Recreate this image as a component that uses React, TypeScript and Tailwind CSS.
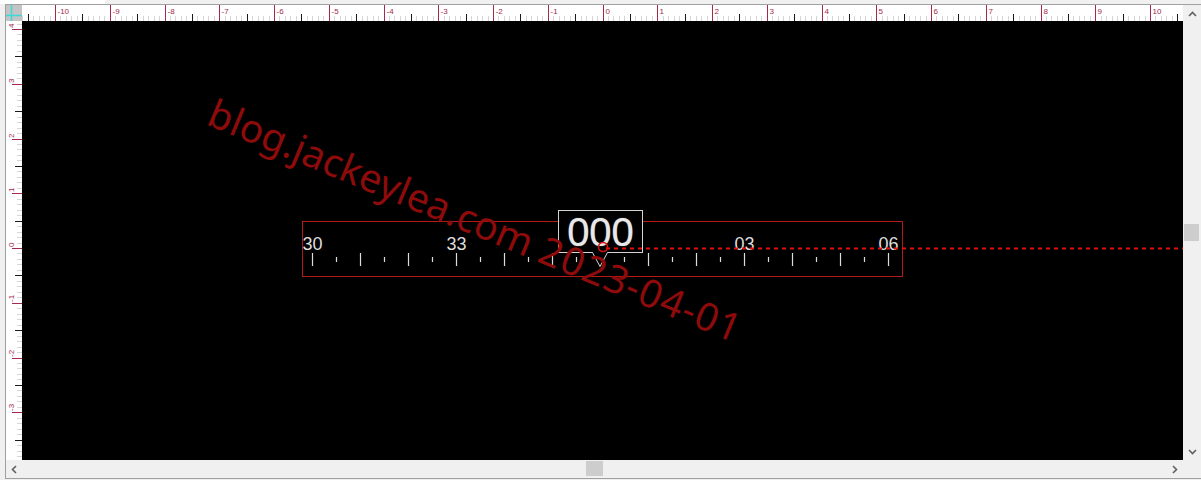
import React from "react";

const RULER_RED = "#a3284a";
const UNIT = 54.75;

function TopRuler() {
  const w = 1161;
  const zero = 580.5;
  const items: React.ReactNode[] = [];
  for (let i = -110; i <= 110; i++) {
    const x = Math.round(zero + (i / 10) * UNIT) + 0.5;
    if (x < 0 || x > w) continue;
    if (i % 10 === 0) {
      items.push(<line key={`t${i}`} x1={x} x2={x} y1={0} y2={16} stroke={RULER_RED} strokeWidth={1} />);
      items.push(
        <text key={`l${i}`} x={x + 2} y={9} className="text-[8px] fill-[#a3284a] font-['Liberation_Sans',sans-serif]">
          {String(i / 10)}
        </text>
      );
    } else if (i % 5 === 0) {
      items.push(<line key={`t${i}`} x1={x} x2={x} y1={9} y2={16} stroke="#1a1a1a" strokeWidth={1} />);
    } else {
      items.push(<line key={`t${i}`} x1={x} x2={x} y1={11} y2={16} stroke="#d6d6d6" strokeWidth={1} />);
    }
  }
  return (
    <svg width={w} height={16} className="block bg-white">
      {items}
    </svg>
  );
}

function LeftRuler() {
  const h = 439;
  const zero = 227;
  const items: React.ReactNode[] = [];
  for (let i = -50; i <= 50; i++) {
    const y = Math.round(zero - (i / 10) * UNIT) + 0.5;
    if (y < 0 || y > h) continue;
    if (i % 10 === 0) {
      items.push(<line key={`t${i}`} x1={6} x2={16} y1={y} y2={y} stroke={RULER_RED} strokeWidth={1} />);
      items.push(
        <text
          key={`l${i}`}
          transform={`translate(8 ${y - 1.5}) rotate(-90)`}
          className="text-[8px] fill-[#a3284a] font-['Liberation_Sans',sans-serif]"
        >
          {String(i / 10)}
        </text>
      );
    } else if (i % 5 === 0) {
      items.push(<line key={`t${i}`} x1={9} x2={16} y1={y} y2={y} stroke="#1a1a1a" strokeWidth={1} />);
    } else {
      items.push(<line key={`t${i}`} x1={11} x2={16} y1={y} y2={y} stroke="#d6d6d6" strokeWidth={1} />);
    }
  }
  return (
    <svg width={16} height={h} className="block bg-white">
      {items}
    </svg>
  );
}

function Chevron({ dir }: { dir: "up" | "down" | "left" | "right" }) {
  const pts = {
    up: "1,6 4.5,2.5 8,6",
    down: "1,3 4.5,6.5 8,3",
    left: "6,1 2.5,4.5 6,8",
    right: "3,1 6.5,4.5 3,8",
  }[dir];
  return (
    <svg width={9} height={9} className="block">
      <polyline points={pts} fill="none" stroke="#606060" strokeWidth={1.6} />
    </svg>
  );
}

function CompassTape() {
  const ticks: React.ReactNode[] = [];
  for (let k = 0; k <= 24; k++) {
    const x = 10.5 + k * 24;
    const long = k % 2 === 0;
    ticks.push(
      <line key={k} x1={x} x2={x} y1={long ? 32 : 36} y2={long ? 45 : 41} stroke="#dcdcdc" strokeWidth={1.2} />
    );
  }
  const labels: [string, number][] = [
    ["30", 0],
    ["33", 6],
    ["00", 12],
    ["03", 18],
    ["06", 24],
  ];
  return (
    <svg width={601} height={56} className="block">
      <rect x={0.5} y={0.5} width={600} height={55} fill="none" stroke="#b41818" strokeWidth={1} />
      {ticks}
      {labels.map(([t, k]) => (
        <text
          key={t}
          x={10.5 + k * 24}
          y={29}
          textAnchor="middle"
          className="text-[18px] fill-[#dedede] font-['Liberation_Sans',sans-serif]"
        >
          {t}
        </text>
      ))}
    </svg>
  );
}

function Compass() {
  return (
    <div className="absolute left-[280px] top-[200px] w-[601px] h-[56px]">
      <CompassTape />
      {/* heading readout */}
      <div className="absolute left-[256px] top-[-11px] w-[85px] h-[43px] border border-[#d4d4d4] bg-black flex items-center justify-center">
        <span className="text-[40px] leading-none text-[#e8e8e8] font-['Liberation_Sans',sans-serif] [text-shadow:0_0_1px_#9a9a9a]">
          000
        </span>
      </div>
      {/* pointer below the readout */}
      <svg width={19} height={17} className="absolute left-[289px] top-[31px] block">
        <polygon points="1.5,0 9,14.5 16.5,0" fill="#000" stroke="none" />
        <polyline points="1.5,0.5 9,14.5 16.5,0.5" fill="none" stroke="#d4d4d4" strokeWidth={1} />
      </svg>
    </div>
  );
}

function Canvas() {
  return (
    <div className="relative w-[1161px] h-[439px] bg-black overflow-hidden">
      <Compass />
      {/* scene x-axis marker */}
      <svg width={589} height={20} className="absolute left-[572px] top-[216px] block">
        <circle cx={9} cy={10} r={4.5} fill="none" stroke="#d81010" strokeWidth={1.6} />
        <line x1={12} x2={589} y1={11.5} y2={11.5} stroke="#e01010" strokeWidth={2} strokeDasharray="4 4" />
      </svg>
      {/* watermark */}
      <div className="absolute left-[183px] top-[68px] origin-[0_35px] rotate-[22.5deg] whitespace-nowrap text-[39px] leading-none text-[#8e0b0b] font-['Noto_Sans',sans-serif]">
        blog.jackeylea.com <span className="tracking-[1.2px]">2023-04-01</span>
      </div>
    </div>
  );
}

export default function App() {
  return (
    <div className="w-[1201px] h-[480px] bg-[#f0f0f0] overflow-hidden flex flex-col">
      <div className="h-[4px] flex shrink-0">
        <div className="w-[105px] bg-white" />
        <div className="flex-1" />
      </div>
      <div className="h-[475px] flex shrink-0">
        <div className="w-[5px] shrink-0" />
        <div className="border-l border-t border-b border-[#a0a0a0] grid grid-cols-[16px_1161px_18px] grid-rows-[16px_439px_18px]">
          {/* ruler corner */}
          <div className="col-start-1 row-start-1 bg-[#c4c4c4]">
            <svg width={16} height={16} className="block">
              <line x1={5.5} x2={5.5} y1={0} y2={16} stroke="#3fd8d8" strokeWidth={1.5} />
              <line x1={0} x2={16} y1={10.5} y2={10.5} stroke="#3fd8d8" strokeWidth={1.5} />
            </svg>
          </div>
          <div className="col-start-2 row-start-1">
            <TopRuler />
          </div>
          {/* vertical scrollbar */}
          <div className="col-start-3 row-start-1 row-span-2 flex flex-col bg-[#f0f0f0]">
            <div className="h-[17px] flex items-center justify-center pt-[2px]">
              <Chevron dir="up" />
            </div>
            <div className="flex-1 flex items-center">
              <div className="ml-[1px] w-[15px] h-[17px] bg-[#cdcdcd]" />
            </div>
            <div className="h-[17px] flex items-center justify-center">
              <Chevron dir="down" />
            </div>
          </div>
          <div className="col-start-1 row-start-2">
            <LeftRuler />
          </div>
          <div className="col-start-2 row-start-2">
            <Canvas />
          </div>
          {/* horizontal scrollbar */}
          <div className="col-start-1 col-span-2 row-start-3 flex bg-[#f0f0f0]">
            <div className="w-[17px] flex items-center justify-center">
              <Chevron dir="left" />
            </div>
            <div className="flex-1 flex justify-center pt-[1px]">
              <div className="w-[17px] h-[15px] bg-[#cdcdcd]" />
            </div>
            <div className="w-[17px] flex items-center justify-center">
              <Chevron dir="right" />
            </div>
          </div>
          <div className="col-start-3 row-start-3 bg-[#f0f0f0]" />
        </div>
      </div>
    </div>
  );
}
